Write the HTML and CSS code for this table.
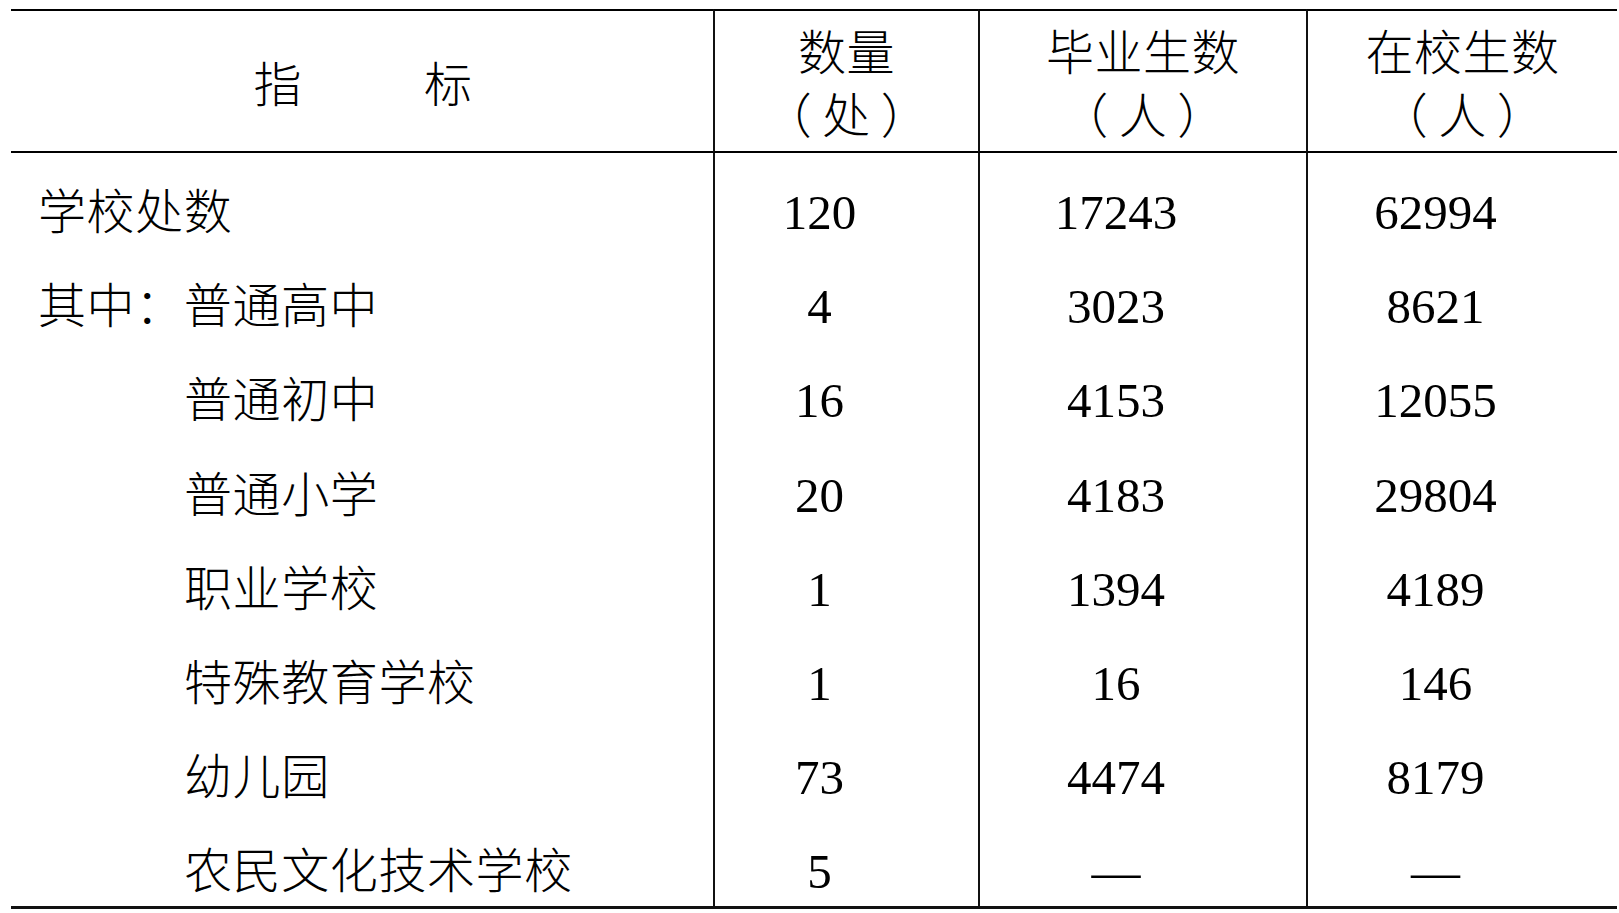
FILE: index.html
```html
<!DOCTYPE html>
<html lang="zh-CN">
<head>
<meta charset="utf-8">
<title>学校统计</title>
<link rel="stylesheet" href="styles.css">
</head>
<body>
<table class="stats">
  <colgroup>
    <col class="c-name">
    <col class="c-num">
    <col class="c-grad">
    <col class="c-enrol">
  </colgroup>
  <thead>
    <tr>
      <th class="h-name"><div class="idx-label"><span>指</span><span>标</span></div></th>
      <th><div class="h-line">数量</div><div class="h-line">（<span class="unit">处</span>）</div></th>
      <th><div class="h-line">毕业生数</div><div class="h-line">（<span class="unit">人</span>）</div></th>
      <th><div class="h-line">在校生数</div><div class="h-line">（<span class="unit">人</span>）</div></th>
    </tr>
  </thead>
  <tbody>
    <tr><td class="name">学校处数</td><td class="num">120</td><td class="num">17243</td><td class="num">62994</td></tr>
    <tr><td class="name">其中：普通高中</td><td class="num">4</td><td class="num">3023</td><td class="num">8621</td></tr>
    <tr><td class="name sub">普通初中</td><td class="num">16</td><td class="num">4153</td><td class="num">12055</td></tr>
    <tr><td class="name sub">普通小学</td><td class="num">20</td><td class="num">4183</td><td class="num">29804</td></tr>
    <tr><td class="name sub">职业学校</td><td class="num">1</td><td class="num">1394</td><td class="num">4189</td></tr>
    <tr><td class="name sub">特殊教育学校</td><td class="num">1</td><td class="num">16</td><td class="num">146</td></tr>
    <tr><td class="name sub">幼儿园</td><td class="num">73</td><td class="num">4474</td><td class="num">8179</td></tr>
    <tr class="last"><td class="name sub">农民文化技术学校</td><td class="num">5</td><td class="num">—</td><td class="num">—</td></tr>
  </tbody>
</table>
</body>
</html>
```
FILE: styles.css
```css
html, body {
  margin: 0;
  padding: 0;
  background: #ffffff;
}

body {
  color: #000000;
  font-family: "Noto Sans CJK SC", "Noto Sans CJK TC", sans-serif;
  font-weight: 300;
}

.stats {
  margin: 9px 0 0 11px;
  width: 1606px;
  table-layout: fixed;
  border-collapse: separate;
  border-spacing: 0;
}

.c-name { width: 702px; }
.c-num { width: 265px; }
.c-grad { width: 328px; }
.c-enrol { width: 311px; }

.stats th {
  border-top: 2px solid #000;
  border-bottom: 2px solid #000;
  padding: 7px 0;
  font-weight: 300;
  font-size: 48px;
  letter-spacing: 0.5px;
  line-height: 63px;
  text-align: center;
  vertical-align: middle;
}

.stats th + th,
.stats td + td {
  border-left: 2px solid #111;
}

.idx-label {
  display: flex;
  justify-content: center;
  gap: 122px;
  padding-left: 2px;
}

.h-line {
  white-space: nowrap;
}

.unit {
  margin: 0 10px;
}

.stats td {
  padding: 31px 0 10.2px 0;
  line-height: 48px;
  vertical-align: baseline;
  white-space: nowrap;
}

.stats td.name {
  padding-left: 27px;
  font-size: 48px;
  letter-spacing: 0.6px;
}

.stats td.sub {
  padding-left: 173px;
}

.stats td.num {
  font-family: "Liberation Serif", "Times New Roman", serif;
  font-weight: 400;
  font-size: 49px;
  text-align: center;
  padding-right: 54px;
}

.stats tr.last td {
  padding-bottom: 9.5px;
  border-bottom: 3px solid #111;
}
```
